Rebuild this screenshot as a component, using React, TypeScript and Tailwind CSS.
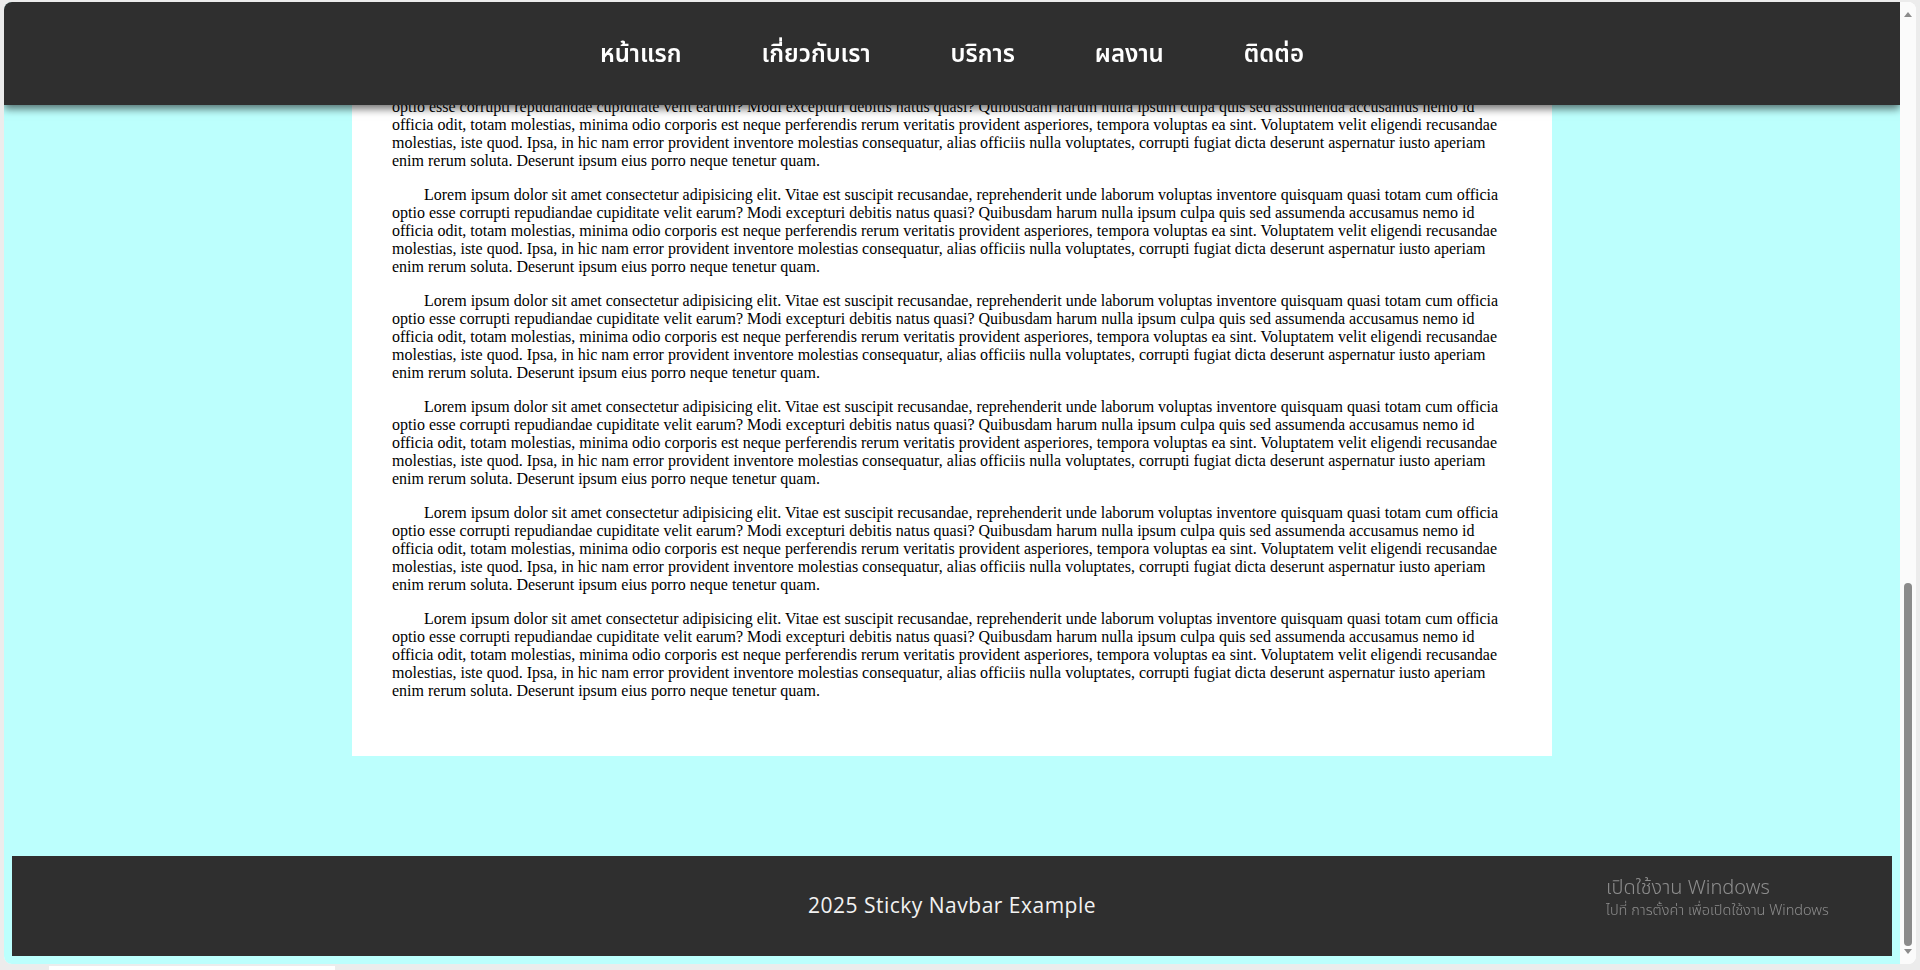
import { useLayoutEffect, useRef } from 'react'

const menu = ['หน้าแรก', 'เกี่ยวกับเรา', 'บริการ', 'ผลงาน', 'ติดต่อ']

const lorem =
    'Lorem ipsum dolor sit amet consectetur adipisicing elit. Vitae est suscipit recusandae, reprehenderit unde laborum voluptas inventore quisquam quasi totam cum officia optio esse corrupti repudiandae cupiditate velit earum? Modi excepturi debitis natus quasi? Quibusdam harum nulla ipsum culpa quis sed assumenda accusamus nemo id officia odit, totam molestias, minima odio corporis est neque perferendis rerum veritatis provident asperiores, tempora voluptas ea sint. Voluptatem velit eligendi recusandae molestias, iste quod. Ipsa, in hic nam error provident inventore molestias consequatur, alias officiis nulla voluptates, corrupti fugiat dicta deserunt aspernatur iusto aperiam enim rerum soluta. Deserunt ipsum eius porro neque tenetur quam.'

const paragraphs = Array.from({ length: 19 }, (_, i) => i)

const Scrollbar = () => {
    return (
        <div className="flex h-full w-[16px] flex-col items-center bg-[#fbfbfb]">
            <div className="mt-[10px] h-0 w-0 border-x-[4px] border-b-[5px] border-x-transparent border-b-[#8c8c8c]" />
            <div className="mt-[566px] h-[363px] w-[8px] rounded-full bg-[#8b8b8b]" />
            <div className="mt-[3px] h-0 w-0 border-x-[4px] border-t-[5px] border-x-transparent border-t-[#8c8c8c]" />
        </div>
    )
}

const App = () => {
    const scrollRef = useRef<HTMLDivElement>(null)

    useLayoutEffect(() => {
        const el = scrollRef.current
        if (el) {
            el.scrollTop = el.scrollHeight
        }
    }, [])

    return (
        <div className="relative h-[970px] w-[1920px] overflow-hidden bg-[#ececec]">
            <div className="ml-[4px] mt-[2px] flex h-[962px] w-[1912px] overflow-hidden rounded-lg bg-white">
                <div
                    ref={scrollRef}
                    className="h-full w-[1896px] overflow-y-scroll bg-[#bcfffd] [scrollbar-width:none]"
                >
                    <nav className="sticky top-0 z-10 flex h-[103px] items-center justify-center gap-[80px] bg-[#2f2f2f] pt-[3px] shadow-[0_4px_8px_rgba(0,0,0,0.55)]">
                        {menu.map((item) => (
                            <a
                                key={item}
                                className="text-[24px] font-semibold text-white [font-family:'Noto_Sans_Thai','Noto_Sans',sans-serif]"
                            >
                                {item}
                            </a>
                        ))}
                    </nav>

                    <main className="pt-10 pb-[92px]">
                        <div className="mx-auto w-[1200px] bg-white p-10 text-[16px] leading-[18px] text-black [font-family:'Liberation_Serif',serif]">
                            {paragraphs.map((i) => (
                                <p key={i} className="my-4 indent-8">
                                    {lorem}
                                </p>
                            ))}
                        </div>
                    </main>

                    <footer className="m-2 flex h-[100px] items-center justify-center bg-[#2f2f2f]">
                        <p className="text-[21px] tracking-[0.5px] text-[#f2f2f2] [font-family:'Open_Sans',sans-serif]">
                            2025 Sticky Navbar Example
                        </p>
                    </footer>
                </div>
                <Scrollbar />
            </div>

            {/* windows activation watermark */}
            <div className="pointer-events-none absolute left-[1606px] top-[874px] text-[#8d8d8d] [font-family:'Noto_Sans','Noto_Sans_Thai',sans-serif]">
                <p className="text-[20px] font-light leading-[26px]">เปิดใช้งาน Windows</p>
                <p className="text-[14.5px] font-light leading-[18px]">ไปที่ การตั้งค่า เพื่อเปิดใช้งาน Windows</p>
            </div>

            <div className="absolute bottom-0 left-[49px] h-[4px] w-[286px] bg-white" />
        </div>
    )
}

export default App
